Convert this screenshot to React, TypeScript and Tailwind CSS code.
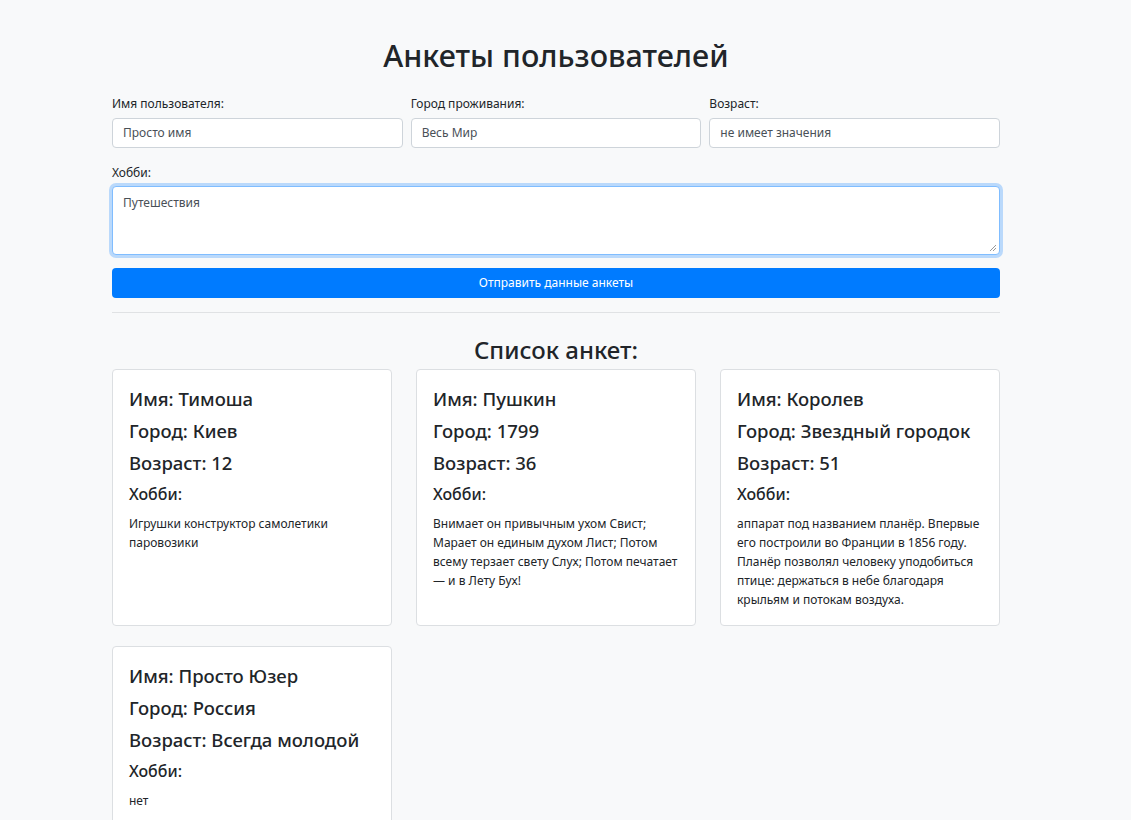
import React from "react";

const cards = [
  { name: "Тимоша", city: "Киев", age: "12", hobby: "Игрушки конструктор самолетики паровозики" },
  { name: "Пушкин", city: "1799", age: "36", hobby: "Внимает он привычным ухом Свист; Марает он единым духом Лист; Потом всему терзает свету Слух; Потом печатает — и в Лету Бух!" },
  { name: "Королев", city: "Звездный городок", age: "51", hobby: "аппарат под названием планёр. Впервые его построили во Франции в 1856 году. Планёр позволял человеку уподобиться птице: держаться в небе благодаря крыльям и потокам воздуха." },
  { name: "Просто Юзер", city: "Россия", age: "Всегда молодой", hobby: "нет" },
];

export default function App() {
  return (
    <div className="min-h-[820px] bg-[#f8f9fa] text-[#212529]" style={{ fontFamily: '"Noto Sans", "Open Sans", sans-serif' }}>
      <div className="ml-[112px] w-[888px] pt-[33px]">
        <h1 className="text-center text-[30.5px] font-medium leading-[44px] mb-[18px]">Анкеты пользователей</h1>
        <div className="grid grid-cols-3 gap-x-[8px]">
          {[
            ["Имя пользователя:", "Просто имя"],
            ["Город проживания:", "Весь Мир"],
            ["Возраст:", "не имеет значения"],
          ].map(([l, v]) => (
            <div key={l} className="flex flex-col">
              <label className="text-[12px] leading-[18px] mb-[5px]">{l}</label>
              <div className="h-[30px] rounded-[4px] border border-[#ced4da] bg-white px-[10px] flex items-center text-[12px] text-[#495057]">{v}</div>
            </div>
          ))}
        </div>
        <label className="block text-[12px] leading-[18px] mt-[16px] mb-[4px]">Хобби:</label>
        <div className="h-[69px] rounded-[4px] border border-[#80bdff] shadow-[0_0_0_3px_rgba(0,123,255,0.25)] bg-white px-[10px] pt-[7px] text-[12px] text-[#495057] relative">
          Путешествия
          <svg className="absolute right-[2px] bottom-[2px]" width="8" height="8" viewBox="0 0 8 8">
            <path d="M7 1 L1 7 M7 4 L4 7" stroke="#999" strokeWidth="1" />
          </svg>
        </div>
        <button className="mt-[13px] w-full h-[30px] rounded-[4px] bg-[#007bff] text-white text-[12px]">Отправить данные анкеты</button>
        <hr className="mt-[14px] border-0 border-t border-[#e0e2e4]" />
        <h2 className="text-center text-[24px] font-medium leading-[34px] mt-[20px] mb-[2px]">Список анкет:</h2>
        <div className="grid grid-cols-3 gap-x-[24px] gap-y-[20px]">
          {cards.map((c) => (
            <div key={c.name} className="bg-white border border-[#dcdfe2] rounded-[4px] px-[16px] pt-[15px] pb-[16px] min-h-[256px]">
              <div className="text-[18.5px] font-medium leading-[28px] mb-[4px]">Имя: {c.name}</div>
              <div className="text-[18.5px] font-medium leading-[28px] mb-[4px]">Город: {c.city}</div>
              <div className="text-[18.5px] font-medium leading-[28px] mb-[5px]">Возраст: {c.age}</div>
              <div className="text-[16px] font-medium leading-[24px] mb-[8px]">Хобби:</div>
              <p className="text-[12px] leading-[19px]">{c.hobby}</p>
            </div>
          ))}
        </div>
      </div>
    </div>
  );
}
